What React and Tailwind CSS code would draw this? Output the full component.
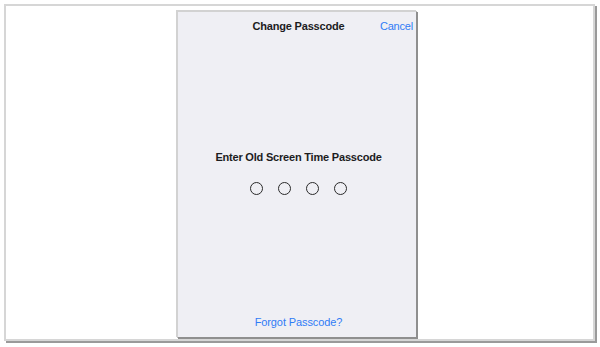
export default function App() {
  const font = { fontFamily: '"Liberation Sans", Arial, sans-serif' };
  return (
    <div className="w-[600px] h-[347px] bg-white pl-[4px] pt-[4px]" style={font}>
      <div className="w-[591px] h-[337px] bg-white border-2 border-[#d6d6d6] shadow-[2px_2px_0_#9a9a9a] pl-[170px] pt-[4px]">
        <div className="w-[240px] h-[327px] bg-[#efeff4] border-l-2 border-t-2 border-[#d2d2d2] shadow-[2px_2px_0_#8f8f8f,1px_1px_0_#bdbdbd] flex flex-col">
          <div className="h-[29px] grid grid-cols-[1fr_auto_1fr] items-center pl-[3px]">
            <div />
            <div className="text-[11px] font-bold text-[#1c1c1e] tracking-[-0.2px]">Change Passcode</div>
            <div className="justify-self-end pr-[3px] text-[11px] text-[#2f7cf6] tracking-[-0.2px]">Cancel</div>
          </div>
          <div className="mt-[109px] pl-[3px] text-center text-[11px] leading-[14px] font-bold text-[#1c1c1e] tracking-[-0.2px]">
            Enter Old Screen Time Passcode
          </div>
          <div className="mt-[18px] flex justify-center gap-[15px] pl-[2px]">
            <div className="w-[13px] h-[13px] rounded-full border border-[#2a2a2a]" />
            <div className="w-[13px] h-[13px] rounded-full border border-[#2a2a2a]" />
            <div className="w-[13px] h-[13px] rounded-full border border-[#2a2a2a]" />
            <div className="w-[13px] h-[13px] rounded-full border border-[#2a2a2a]" />
          </div>
          <div className="mt-auto pb-[8px] pl-[3px] text-center text-[11px] leading-[14px] text-[#2f7cf6] tracking-[-0.1px]">
            Forgot Passcode?
          </div>
        </div>
      </div>
    </div>
  );
}
